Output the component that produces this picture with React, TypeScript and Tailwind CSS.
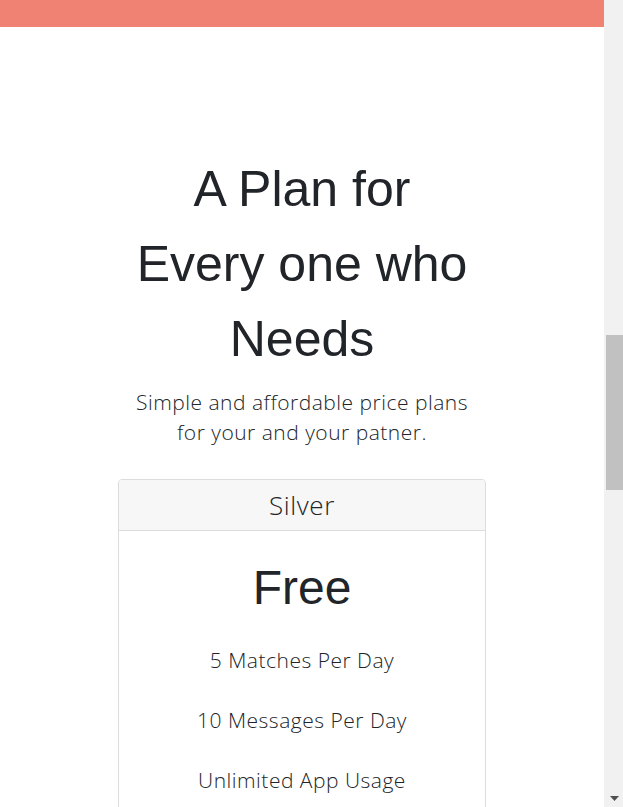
import React from 'react';

const features = ['5 Matches Per Day', '10 Messages Per Day', 'Unlimited App Usage'];

const Scrollbar: React.FC = () => (
  <div className="w-[19px] shrink-0 bg-[#f1f1f1] flex flex-col">
    <div className="mt-[335px] ml-[2px] h-[155px] bg-[#c1c1c1]" />
    <div className="flex-1" />
    <div className="h-[17px] flex items-center justify-center pl-[2px]">
      <svg width="9" height="5" viewBox="0 0 9 5">
        <polygon points="0,0 9,0 4.5,5" fill="#505050" />
      </svg>
    </div>
  </div>
);

export default function App() {
  const body = { fontFamily: '"Open Sans", "Noto Sans", sans-serif' };

  return (
    <div className="flex h-[807px] overflow-hidden bg-white text-[#212529]">
      <div className="flex-1 min-w-0">
        {/* bottom of the navbar */}
        <div className="h-[27px] bg-[#f08273]" />

        <section className="flex flex-col items-center pt-[125px]">
          <h1
            className="max-w-[340px] text-center text-[50px] leading-[75px] font-normal"
            style={{ fontFamily: '"Liberation Sans", Arial, sans-serif' }}
          >
            A Plan for Every one who Needs
          </h1>

          <p className="mt-[10px] text-center text-[21px] leading-[30px] tracking-[0.5px] font-light" style={body}>
            <span className="block">Simple and affordable price plans</span>
            <span className="block">for your and your patner.</span>
          </p>

          {/* pricing card */}
          <div className="mt-[32px] w-[368px] rounded-[4px] border border-[#dcdcdc] overflow-hidden">
            <div className="h-[51px] flex items-center justify-center bg-[#f7f7f7] border-b border-[#dcdcdc]">
              <h4 className="text-[26px] tracking-[0.6px] font-light" style={body}>Silver</h4>
            </div>
            <div className="flex flex-col items-center pt-[28px] pb-10">
              <h2
                className="text-[48px] leading-[58px] font-normal"
                style={{ fontFamily: '"Liberation Sans", Arial, sans-serif' }}
              >
                Free
              </h2>
              <ul className="mt-[28px] flex flex-col items-center gap-[30px]" style={body}>
                {features.map((f) => (
                  <li key={f} className="text-[21px] leading-[30px] tracking-[0.5px] font-light">{f}</li>
                ))}
              </ul>
            </div>
          </div>
        </section>
      </div>
      <Scrollbar />
    </div>
  );
}
